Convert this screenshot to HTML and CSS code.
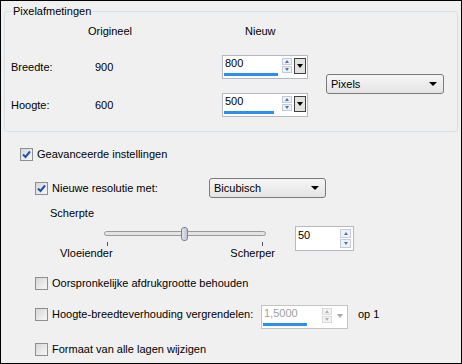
FILE: index.html
```html
<!DOCTYPE html>
<html lang="nl">
  <head>
    <meta charset="UTF-8" />
    <title>Afbeeldingsgrootte wijzigen</title>
    <link rel="stylesheet" href="styles.css">
  </head>
  <body>
    <div class="dialog">
      <!-- Pixelafmetingen -->
      <fieldset class="group">
        <legend>Pixelafmetingen</legend>
        <div class="dims">
          <span class="head-orig">Origineel</span>
          <span class="head-new">Nieuw</span>

          <span class="dim-label row-w">Breedte:</span>
          <span class="dim-orig row-w">900</span>
          <div class="spin spin-dim row-w">
            <div class="spin-field">
              <span class="spin-value">800</span>
              <span class="spin-bar" style="width: 54px"></span>
            </div>
            <div class="spin-arrows"><span class="arrow up"></span><span class="arrow down"></span></div>
            <span class="spin-drop"></span>
          </div>

          <span class="dim-label row-h">Hoogte:</span>
          <span class="dim-orig row-h">600</span>
          <div class="spin spin-dim row-h">
            <div class="spin-field">
              <span class="spin-value">500</span>
              <span class="spin-bar" style="width: 50px"></span>
            </div>
            <div class="spin-arrows"><span class="arrow up"></span><span class="arrow down"></span></div>
            <span class="spin-drop"></span>
          </div>

          <div class="select select-unit"><span>Pixels</span><span class="caret"></span></div>
        </div>
      </fieldset>

      <!-- Geavanceerde instellingen -->
      <div class="advanced">
        <label class="check">
          <span class="cb checked"><svg width="11" height="11" viewBox="0 0 11 11"><polyline points="2,5.5 4.5,8 9,2.5" fill="none" stroke="#2250ae" stroke-width="2"/></svg></span>
          Geavanceerde instellingen
        </label>

        <div class="sub">
          <div class="row row-res">
            <label class="check check-res">
              <span class="cb checked"><svg width="11" height="11" viewBox="0 0 11 11"><polyline points="2,5.5 4.5,8 9,2.5" fill="none" stroke="#2250ae" stroke-width="2"/></svg></span>
              Nieuwe resolutie met:
            </label>
            <div class="select select-res"><span>Bicubisch</span><span class="caret"></span></div>
          </div>

          <div class="sharp-title">Scherpte</div>

          <div class="row row-slider">
            <div class="slider">
              <div class="track-area">
                <div class="track"></div>
                <span class="thumb"></span>
                <span class="tick tick-min"></span>
                <span class="tick tick-max"></span>
              </div>
              <div class="slider-labels">
                <span>Vloeiender</span>
                <span>Scherper</span>
              </div>
            </div>
            <div class="spin spin-sharp">
              <div class="spin-field">
                <span class="spin-value">50</span>
              </div>
              <div class="spin-arrows"><span class="arrow up"></span><span class="arrow down"></span></div>
            </div>
          </div>

          <label class="check row-keep">
            <span class="cb"></span>
            Oorspronkelijke afdrukgrootte behouden
          </label>

          <div class="row row-ratio">
            <label class="check check-ratio">
              <span class="cb"></span>
              Hoogte-breedteverhouding vergrendelen:
            </label>
            <div class="spin spin-ratio disabled">
              <div class="spin-field">
                <span class="spin-value">1,5000</span>
                <span class="spin-bar" style="width: 44px"></span>
              </div>
              <div class="spin-arrows"><span class="arrow up"></span><span class="arrow down"></span></div>
              <span class="spin-drop"></span>
            </div>
            <span class="ratio-unit">op 1</span>
          </div>

          <label class="check row-layers">
            <span class="cb"></span>
            Formaat van alle lagen wijzigen
          </label>
        </div>
      </div>
    </div>
  </body>
</html>
```

FILE: styles.css
```css
* {
  box-sizing: border-box;
}

body {
  margin: 0;
  font-family: "Liberation Sans", Arial, sans-serif;
  font-size: 11px;
  line-height: 13px;
  color: #000;
  background-color: #f0f0f0;
}

.dialog {
  width: 462px;
  height: 364px;
  border: 1px solid #000;
  background-color: #f0f0f0;
}

/* Groupe Pixelafmetingen */
.group {
  margin: 4px 3px 0;
  padding: 0;
  min-width: 0;
  border: 1px solid #d5dfe5;
  border-radius: 3px;
}

.group legend {
  margin-left: 6px;
  padding: 0 2px;
  line-height: 13px;
}

.dims {
  display: grid;
  grid-template-columns: 77px 134px 104px 118px;
  grid-template-rows: 13px 17px 24px 14px 24px;
  padding: 7px 0 14px 6px;
}

.head-orig {
  grid-column: 2;
  grid-row: 1;
}

.head-new {
  grid-column: 3;
  grid-row: 1;
  padding-left: 23px;
}

.row-w {
  grid-row: 3;
}

.row-h {
  grid-row: 5;
}

.dim-label {
  grid-column: 1;
  align-self: center;
}

.dim-orig {
  grid-column: 2;
  align-self: center;
  padding-left: 7px;
}

.spin-dim {
  grid-column: 3;
  width: 86px;
}

.select-unit {
  grid-column: 4;
  grid-row: 3 / 6;
  align-self: center;
  margin-bottom: 4px;
  width: 118px;
}

/* Spin box */
.spin {
  display: flex;
  height: 24px;
  padding: 1px;
  border: 1px solid #b5bac1;
  background-color: #fff;
}

.spin-field {
  flex: 1;
  display: flex;
  flex-direction: column;
  justify-content: space-between;
  padding-bottom: 1px;
}

.spin-value {
  padding: 0 0 0 1px;
  line-height: 13px;
}

.spin-bar {
  display: block;
  height: 3px;
  background-color: #2b8ef0;
}

.spin-arrows {
  display: flex;
  flex-direction: column;
  gap: 1px;
  width: 10px;
  margin-top: 1px;
}

.arrow {
  position: relative;
  height: 7px;
  border: 1px solid #c4cbd8;
  background-color: #eef1f6;
}

.arrow::before {
  content: "";
  position: absolute;
  left: 2px;
  border-left: 2px solid transparent;
  border-right: 2px solid transparent;
}

.arrow.up::before {
  top: 1px;
  border-bottom: 3px solid #5470a8;
}

.arrow.down::before {
  top: 1px;
  border-top: 3px solid #5470a8;
}

.spin-drop {
  position: relative;
  width: 12px;
  height: 16px;
  margin: 1px 0 0 2px;
  border: 1px solid #404040;
  background-color: #e2e2e2;
}

.spin-drop::before {
  content: "";
  position: absolute;
  left: 2px;
  top: 5px;
  border-left: 3px solid transparent;
  border-right: 3px solid transparent;
  border-top: 4px solid #000;
}

.spin.disabled {
  border-color: #c4c4c4;
  color: #a0a0a0;
}

.spin.disabled .arrow {
  border-color: #d8d8d8;
  background-color: #f4f4f4;
}

.spin.disabled .arrow.up::before {
  border-bottom-color: #b0b0b0;
}

.spin.disabled .arrow.down::before {
  border-top-color: #b0b0b0;
}

.spin.disabled .spin-drop {
  border-color: #fff;
  background-color: #fff;
}

.spin.disabled .spin-drop::before {
  border-top-color: #a8a8a8;
}

/* Liste déroulante */
.select {
  display: flex;
  justify-content: space-between;
  align-items: center;
  height: 20px;
  padding: 0 6px 0 4px;
  border: 1px solid #7a7a7a;
  border-radius: 3px;
  background: linear-gradient(#f6f6f6, #e4e4e4);
}

.caret {
  width: 0;
  height: 0;
  border-left: 4px solid transparent;
  border-right: 4px solid transparent;
  border-top: 4px solid #000;
}

/* Geavanceerde instellingen */
.advanced {
  padding: 16px 0 0 19px;
}

.check {
  display: flex;
  align-items: center;
  gap: 4px;
  height: 13px;
}

.cb {
  display: flex;
  align-items: center;
  justify-content: center;
  width: 13px;
  height: 13px;
  flex-shrink: 0;
  border: 1px solid #8c9096;
  background: linear-gradient(135deg, #d6d6d6, #f8f8f8);
}

.sub {
  padding-left: 15px;
}

.row {
  display: flex;
}

.row-res {
  align-items: center;
  height: 20px;
  margin-top: 17px;
}

.check-res {
  width: 174px;
}

.select-res {
  width: 117px;
}

.sharp-title {
  margin-top: 9px;
  padding-left: 15px;
}

.row-slider {
  margin-top: 6px;
}

.slider {
  width: 215px;
  margin-left: 25px;
}

.track-area {
  position: relative;
  height: 21px;
}

.track {
  position: absolute;
  left: 44px;
  top: 5px;
  width: 162px;
  height: 5px;
  border: 1px solid #999;
  border-radius: 3px;
  background-color: #e4e4e4;
}

.thumb {
  position: absolute;
  left: 121px;
  top: 1px;
  width: 7px;
  height: 14px;
  border: 1px solid #7b819c;
  border-radius: 3px;
  background: linear-gradient(90deg, #e2e4ef, #bfc3d6);
}

.tick {
  position: absolute;
  top: 16px;
  width: 1px;
  height: 4px;
  background-color: #555;
}

.tick-min {
  left: 47px;
}

.tick-max {
  left: 202px;
}

.slider-labels {
  display: flex;
  justify-content: space-between;
}

.spin-sharp {
  width: 59px;
  height: 25px;
  margin-left: 20px;
}

.spin-sharp .spin-value {
  margin-top: 1px;
}

.spin-sharp .spin-arrows {
  width: 11px;
  margin-right: 1px;
}

.spin-sharp .arrow {
  height: 9px;
}

.spin-sharp .arrow::before {
  left: 3px;
  top: 2px;
}

.row-keep {
  margin-top: 17px;
}

.row-ratio {
  align-items: flex-start;
  margin-top: 18px;
}

.check-ratio {
  width: 226px;
}

.spin-ratio {
  width: 87px;
  margin-top: -3px;
}

.ratio-unit {
  margin-left: 10px;
}

.row-layers {
  margin-top: 14px;
}
```
